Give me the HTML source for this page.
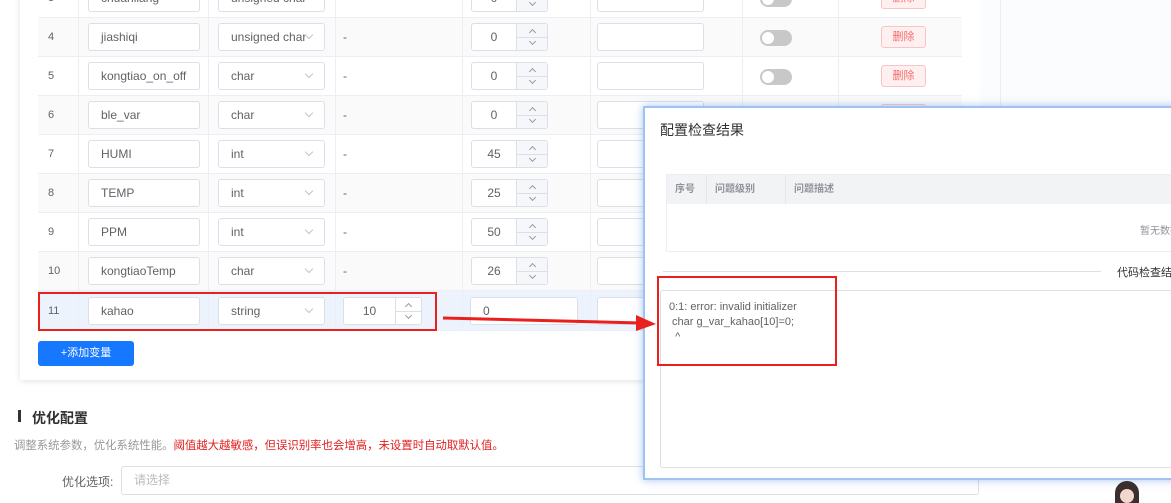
<!DOCTYPE html>
<html><head><meta charset="utf-8"><style>
*{box-sizing:border-box;margin:0;padding:0}
body{width:1171px;height:503px;overflow:hidden;background:#fff;font-family:"Liberation Sans","Noto Sans CJK SC",sans-serif;font-size:12px;color:#606266;position:relative}
.abs{position:absolute}
.card{left:20px;top:-10px;width:960px;height:390px;background:#fff;box-shadow:0 1px 6px rgba(0,0,0,.12)}
.row{position:absolute;left:38px;width:924px;height:39px;border-bottom:1px solid #ebeef5}
.cell{position:absolute;top:0;height:39px;border-left:1px solid #ebeef5}
.inp{position:absolute;height:28px;border:1px solid #dcdfe6;border-radius:3px;background:#fff;font-size:12px;color:#606266;line-height:26px;padding-left:12px;white-space:nowrap;overflow:hidden}
.sel::after{content:"";position:absolute;right:12px;top:8px;width:5px;height:5px;border-right:1px solid #c0c4cc;border-bottom:1px solid #c0c4cc;transform:rotate(45deg)}
.num{text-align:center;padding:0 31px 0 0}
.spin{position:absolute;right:0;top:0;width:31px;height:26px;border-left:1px solid #dcdfe6;background:#f5f7fa}
.spin:before{content:"";position:absolute;left:0;right:0;top:13px;border-top:1px solid #dcdfe6}
.spin i,.spin b{position:absolute;left:13px;width:5px;height:5px;border-left:1px solid #999;border-top:1px solid #999}
.spin i{top:6px;transform:rotate(45deg)}
.spin b{top:15px;transform:rotate(225deg)}
.sw{position:absolute;width:32px;height:16px;border-radius:8px;background:#c8c8c8}
.sw:after{content:"";position:absolute;left:2px;top:2px;width:12px;height:12px;border-radius:50%;background:#fff}
.del{position:absolute;width:45px;height:22px;border:1px solid #fbc4c4;background:#fef0f0;border-radius:3px;color:#f56c6c;font-size:11px;text-align:center;line-height:20px}
</style></head><body>
<div class="abs card"></div>
<div class="abs" style="left:980px;top:0;width:191px;height:110px;background:#fbfcfd"></div>
<div class="abs" style="left:1000px;top:0;width:1px;height:110px;background:#eee"></div>

<div id="rows"></div>
<script>
var data=[[3,"chuanliang","unsigned char","0",-21],[4,"jiashiqi","unsigned char","0",18],[5,"kongtiao_on_off","char","0",57],[6,"ble_var","char","0",96],[7,"HUMI","int","45",135],[8,"TEMP","int","25",174],[9,"PPM","int","50",213],[10,"kongtiaoTemp","char","26",252]];
var h="";
data.forEach(function(d){var y=d[4];var bg=d[0]%2==0?"#fafafa":"#fff";
h+='<div class="row" style="top:'+y+'px;background:'+bg+'">'+
['40','170','297','424','552','704','800'].map(function(x){return '<div class="cell" style="left:'+x+'px"></div>'}).join('')+
'<div class="abs" style="left:10px;top:13px;font-size:11px">'+d[0]+'</div>'+
'<div class="inp" style="left:50px;top:5px;width:112px">'+d[1]+'</div>'+
'<div class="inp sel" style="left:180px;top:5px;width:107px">'+d[2]+'</div>'+
'<div class="abs" style="left:305px;top:12px">-</div>'+
'<div class="inp num" style="left:433px;top:5px;width:77px">'+d[3]+'<div class="spin"><i></i><b></b></div></div>'+
'<div class="inp" style="left:559px;top:5px;width:107px"></div>'+
'<div class="sw" style="left:722px;top:12px"></div>'+
'<div class="del" style="left:843px;top:8px">删除</div></div>';});
h+='<div class="row" style="top:291px;height:40px;background:#ecf3fd">'+
['40','170','297','424','552'].map(function(x){return '<div class="cell" style="left:'+x+'px;height:40px"></div>'}).join('')+
'<div class="abs" style="left:10px;top:14px;font-size:11px">11</div>'+
'<div class="inp" style="left:50px;top:6px;width:112px">kahao</div>'+
'<div class="inp sel" style="left:180px;top:6px;width:107px">string</div>'+
'<div class="inp num" style="left:305px;top:6px;width:79px;padding-right:26px">10<div class="spin" style="width:26px;background:#fff"><i style="left:10px"></i><b style="left:10px"></b></div></div>'+
'<div class="inp" style="left:432px;top:6px;width:108px">0</div>'+
'<div class="inp" style="left:559px;top:6px;width:107px"></div></div>';
document.getElementById('rows').innerHTML=h;
</script>
<div class="abs" style="left:38px;top:292px;width:399px;height:39px;border:2px solid #e8201e"></div>
<div class="abs" style="left:38px;top:341px;width:96px;height:25px;background:#1677ff;border-radius:3px;color:#fff;font-size:11px;text-align:center;line-height:25px">+添加变量</div>

<div class="abs" style="left:18px;top:410px;width:3px;height:12px;background:#333"></div>
<div class="abs" style="left:32px;top:408px;font-size:14px;font-weight:bold;color:#303133">优化配置</div>
<div class="abs" style="left:14px;top:437px;font-size:11.4px;color:#999;white-space:nowrap">调整系统参数，优化系统性能。<span style="color:#e02020">阈值越大越敏感，但误识别率也会增高，未设置时自动取默认值。</span></div>
<div class="abs" style="left:62px;top:473px;font-size:12px;color:#606266">优化选项:</div>
<div class="abs" style="left:121px;top:466px;width:858px;height:29px;border:1px solid #dcdfe6;border-radius:3px;color:#bbb;padding-left:12px;line-height:27px">请选择</div>

<div class="abs" style="left:643px;top:106px;width:540px;height:374px;background:#fff;border:2px solid #9fc2ef;box-shadow:0 0 8px rgba(80,140,230,.5)">
<div class="abs" style="left:15px;top:12px;font-size:14px;color:#303133">配置检查结果</div>
<div class="abs" style="left:21px;top:66px;width:520px;height:78px;border:1px solid #ebeef5">
<div class="abs" style="left:0;top:0;width:520px;height:29px;background:#f2f3f5;font-size:10px;color:#909399;font-weight:bold;line-height:29px">
<span class="abs" style="left:8px">序号</span><span class="abs" style="left:48px">问题级别</span><span class="abs" style="left:127px">问题描述</span>
<div class="abs" style="left:39px;top:0;width:1px;height:29px;background:#e6e6e6"></div><div class="abs" style="left:118px;top:0;width:1px;height:29px;background:#e6e6e6"></div></div>
<div class="abs" style="left:473px;top:47px;font-size:10px;color:#909399;white-space:nowrap">暂无数据</div></div>
<div class="abs" style="left:18px;top:163px;width:438px;height:1px;background:#dcdfe6"></div>
<div class="abs" style="left:472px;top:156px;font-size:11px;color:#303133;white-space:nowrap">代码检查结果</div>
<div class="abs" style="left:15px;top:182px;width:520px;height:178px;border:1px solid #dcdfe6;border-radius:3px"></div>
<div class="abs" style="left:24px;top:192px;font-size:11px;color:#606266;line-height:15px;white-space:pre">0:1: error: invalid initializer
 char g_var_kahao[10]=0;
  ^</div>
<div class="abs" style="left:12px;top:168px;width:180px;height:90px;border:2px solid #e8201e"></div>
</div>
<svg class="abs" style="left:440px;top:310px" width="220" height="24"><line x1="3" y1="8" x2="200" y2="13" stroke="#e8201e" stroke-width="3"/><polygon points="196,5 216,14 196,21" fill="#e8201e"/></svg>
<div class="abs" style="left:1115px;top:481px;width:24px;height:22px;border-radius:12px 12px 0 0;background:#3a2e2e"></div>
<div class="abs" style="left:1120px;top:489px;width:14px;height:14px;border-radius:7px;background:#f3d7cc"></div>
</body></html>
